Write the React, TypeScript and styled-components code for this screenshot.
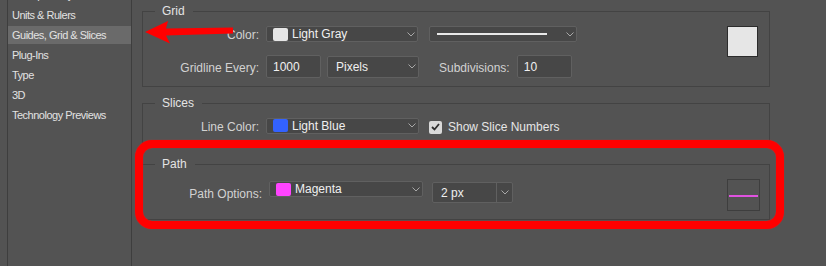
import styled, { createGlobalStyle } from 'styled-components';

const GlobalStyle = createGlobalStyle`
  html, body {
    margin: 0;
    padding: 0;
    background: #535353;
  }
  body {
    font-family: "Liberation Sans", Arial, sans-serif;
    color: #e0e0e0;
  }
`;

const Window = styled.div`
  position: relative;
  display: flex;
  width: 826px;
  height: 266px;
  overflow: hidden;
  background: #535353;
`;

const Sidebar = styled.nav`
  flex-shrink: 0;
  width: 123px;
  height: 100%;
  margin-left: 7px;
  border-left: 1px solid #3e3e3e;
  border-right: 1px solid #3e3e3e;
  overflow: hidden;
`;

const SideList = styled.ul`
  display: flex;
  flex-direction: column;
  gap: 2px;
  margin: -14px 0 0;
  padding: 0;
  list-style: none;
`;

const SideItem = styled.li<{ $active?: boolean }>`
  height: 18px;
  padding-left: 4px;
  line-height: 18px;
  font-size: 11px;
  letter-spacing: -0.5px;
  color: #e2e2e2;
  white-space: nowrap;
  background: ${(p) => (p.$active ? '#6a6a6a' : 'transparent')};
`;

const Content = styled.main`
  display: flex;
  flex-direction: column;
  gap: 16px;
  padding: 11px 0 0 10px;
`;

const Group = styled.section`
  position: relative;
  display: flex;
  align-items: flex-start;
  box-sizing: border-box;
  width: 628px;
  border: 1px solid #434343;
`;

const Legend = styled.span`
  position: absolute;
  top: -8px;
  left: 12px;
  padding: 0 8px 0 7px;
  background: #535353;
  font-size: 12px;
  line-height: 14px;
  color: #e4e4e4;
`;

const Fields = styled.div<{ $pad: string; $gap?: number }>`
  display: flex;
  flex-direction: column;
  gap: ${(p) => p.$gap ?? 0}px;
  padding: ${(p) => p.$pad};
`;

const Row = styled.div<{ $h: number }>`
  display: flex;
  align-items: center;
  height: ${(p) => p.$h}px;
`;

const Label = styled.span<{ $w?: number; $gapLeft?: number }>`
  flex-shrink: 0;
  width: ${(p) => (p.$w ? `${p.$w}px` : 'auto')};
  margin-left: ${(p) => p.$gapLeft ?? 0}px;
  margin-right: 7px;
  padding-top: 2px;
  text-align: right;
  font-size: 12px;
  color: #d2d2d2;
  white-space: nowrap;
`;

const Field = styled.div<{ $w: number; $h: number; $ml?: number; $mt?: number }>`
  display: flex;
  align-items: center;
  flex-shrink: 0;
  box-sizing: border-box;
  width: ${(p) => p.$w}px;
  height: ${(p) => p.$h}px;
  margin-left: ${(p) => p.$ml ?? 0}px;
  margin-top: ${(p) => p.$mt ?? 0}px;
  align-self: ${(p) => (p.$mt ? 'flex-start' : 'center')};
  border: 1px solid #606060;
  border-radius: 2px;
  background: #474747;
  font-size: 12px;
  color: #f0f0f0;
  white-space: nowrap;
`;

const InputText = styled.span`
  padding-left: 6px;
`;

const SelectText = styled.span`
  flex: 1;
  padding-left: 8px;
`;

const Swatch = styled.span<{ $color: string }>`
  flex-shrink: 0;
  width: 15px;
  height: 13px;
  margin: 0 4px 0 6px;
  border-radius: 2px;
  background: ${(p) => p.$color};
`;

const SwatchLabel = styled.span`
  flex: 1;
`;

const LineSample = styled.span`
  flex: 1;
  height: 2px;
  margin: 0 17px 0 7px;
  background: #e8e8e8;
`;

const ChevronBox = styled.span<{ $divided?: boolean }>`
  display: flex;
  align-items: center;
  justify-content: center;
  align-self: stretch;
  width: ${(p) => (p.$divided ? '15px' : '12px')};
  border-left: ${(p) => (p.$divided ? '1px solid #606060' : 'none')};
`;

const BigSwatch = styled.div`
  flex-shrink: 0;
  box-sizing: border-box;
  width: 31px;
  height: 31px;
  margin: 14px 11px 0 auto;
  border: 1px solid #2c2c2c;
  background: #e6e6e6;
`;

const CheckBox = styled.span`
  display: flex;
  align-items: center;
  justify-content: center;
  flex-shrink: 0;
  width: 13px;
  height: 13px;
  margin: 3px 0 0 10px;
  border-radius: 2px;
  background: #d9d9d9;
`;

const CheckLabel = styled.span`
  margin-left: 6px;
  padding-top: 3px;
  font-size: 12px;
  color: #e6e6e6;
`;

const PathPreview = styled.div`
  display: flex;
  align-items: center;
  flex-shrink: 0;
  box-sizing: border-box;
  width: 33px;
  height: 32px;
  margin: 14px 9px 8px auto;
  border: 1px solid #3e3e3e;
  padding: 0 1px;
`;

const PathStroke = styled.span`
  flex: 1;
  height: 2px;
  margin-top: 1px;
  background: #e052e0;
`;

const Highlight = styled.div`
  position: absolute;
  top: -25px;
  left: -8px;
  right: -15px;
  bottom: -10px;
  border: 8px solid #ff0000;
  border-radius: 17px;
  box-shadow: 0 0 1px #ff2020, inset 0 0 1px #ff2020;
  pointer-events: none;
`;

const ArrowLayer = styled.svg`
  position: absolute;
  top: 0;
  left: 0;
  pointer-events: none;
`;

function Chevron() {
  return (
    <svg width="8" height="5" viewBox="0 0 8 5">
      <polyline points="0.5,0.5 4,4 7.5,0.5" fill="none" stroke="#a8a8a8" strokeWidth="1" />
    </svg>
  );
}

function Check() {
  return (
    <svg width="9" height="8" viewBox="0 0 9 8">
      <polyline points="1,4 3.5,6.5 8,1" fill="none" stroke="#2e2e2e" strokeWidth="1.8" />
    </svg>
  );
}

type ColorSelectProps = { w: number; color: string; label: string; ml?: number; mt?: number };

function ColorSelect({ w, color, label, ml, mt }: ColorSelectProps) {
  return (
    <Field $w={w} $h={16} $ml={ml} $mt={mt}>
      <Swatch $color={color} />
      <SwatchLabel>{label}</SwatchLabel>
      <ChevronBox>
        <Chevron />
      </ChevronBox>
    </Field>
  );
}

const sections = [
  'Transparency & Gamut',
  'Units & Rulers',
  'Guides, Grid & Slices',
  'Plug-Ins',
  'Type',
  '3D',
  'Technology Previews',
];

export default function App() {
  return (
    <>
      <GlobalStyle />
      <Window>
        <Sidebar>
          <SideList>
            {sections.map((name) => (
              <SideItem key={name} $active={name === 'Guides, Grid & Slices'}>
                {name}
              </SideItem>
            ))}
          </SideList>
        </Sidebar>

        <Content>
          <Group>
            <Legend>Grid</Legend>
            <Fields $pad="14px 0 8px" $gap={13}>
              <Row $h={16}>
                <Label $w={116}>Color:</Label>
                <ColorSelect w={152} color="#e6e6e6" label="Light Gray" />
                <Field $w={148} $h={16} $ml={11}>
                  <LineSample />
                  <ChevronBox>
                    <Chevron />
                  </ChevronBox>
                </Field>
              </Row>
              <Row $h={23}>
                <Label $w={116}>Gridline Every:</Label>
                <Field $w={55} $h={23}>
                  <InputText>1000</InputText>
                </Field>
                <Field $w={92} $h={22} $ml={6}>
                  <SelectText>Pixels</SelectText>
                  <ChevronBox>
                    <Chevron />
                  </ChevronBox>
                </Field>
                <Label $gapLeft={20}>Subdivisions:</Label>
                <Field $w={55} $h={23}>
                  <InputText>10</InputText>
                </Field>
              </Row>
            </Fields>
            <BigSwatch />
          </Group>

          <Group>
            <Legend>Slices</Legend>
            <Fields $pad="14px 0 14px">
              <Row $h={15}>
                <Label $w={116}>Line Color:</Label>
                <ColorSelect w={153} color="#3362ff" label="Light Blue" />
                <CheckBox>
                  <Check />
                </CheckBox>
                <CheckLabel>Show Slice Numbers</CheckLabel>
              </Row>
            </Fields>
          </Group>

          <Group>
            <Legend>Path</Legend>
            <Fields $pad="17px 0 0">
              <Row $h={21}>
                <Label $w={119}>Path Options:</Label>
                <ColorSelect w={154} color="#ff44ff" label="Magenta" mt={-1} />
                <Field $w={81} $h={21} $ml={9}>
                  <SelectText>2 px</SelectText>
                  <ChevronBox $divided>
                    <Chevron />
                  </ChevronBox>
                </Field>
              </Row>
            </Fields>
            <PathPreview>
              <PathStroke />
            </PathPreview>
            <Highlight />
          </Group>
        </Content>

        <ArrowLayer width="826" height="266" viewBox="0 0 826 266">
          <polygon
            points="145,32 168,21 166,28.5 233,27.5 233,33.5 166,35.5 170,43.5"
            fill="#ff0000"
          />
        </ArrowLayer>
      </Window>
    </>
  );
}
